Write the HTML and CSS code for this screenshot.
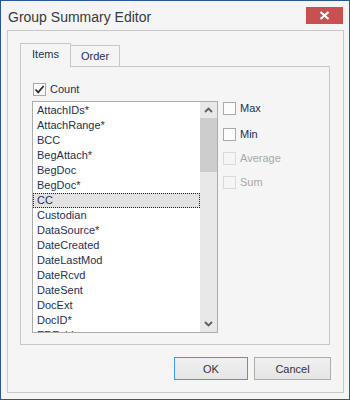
FILE: index.html
```html
<!DOCTYPE html>
<html lang="en">
<head>
    <meta charset="UTF-8">
    <title>Group Summary Editor</title>
    <link rel="stylesheet" href="styles.css">
</head>
<body>

<div class="window">
    <div class="titlebar">
        <div class="title">Group Summary Editor</div>
        <div class="close">
            <svg width="11" height="9" viewBox="0 0 11 9"><path d="M1.5 1 L9.5 8 M9.5 1 L1.5 8" stroke="#fff" stroke-width="2.2"/></svg>
        </div>
    </div>

    <div class="panel">
        <div class="tabs">
            <div class="tab-head">
                <div class="tab active">Items</div>
                <div class="tab">Order</div>
            </div>
            <div class="tab-page">
                <div class="check count">
                    <span class="box">
                        <svg width="11" height="11" viewBox="0 0 11 11"><path d="M1.5 5.5 L4.2 8.3 L9.6 2" stroke="#2b2b2b" stroke-width="1.8" fill="none"/></svg>
                    </span>
                    <span>Count</span>
                </div>

                <div class="columns">
                    <div class="listbox">
                        <div class="items">
                            <div class="item">AttachIDs*</div>
                            <div class="item">AttachRange*</div>
                            <div class="item">BCC</div>
                            <div class="item">BegAttach*</div>
                            <div class="item">BegDoc</div>
                            <div class="item">BegDoc*</div>
                            <div class="item selected">CC</div>
                            <div class="item">Custodian</div>
                            <div class="item">DataSource*</div>
                            <div class="item">DateCreated</div>
                            <div class="item">DateLastMod</div>
                            <div class="item">DateRcvd</div>
                            <div class="item">DateSent</div>
                            <div class="item">DocExt</div>
                            <div class="item">DocID*</div>
                            <div class="item">EDFolder</div>
                        </div>
                        <div class="scrollbar">
                            <div class="arrow">
                                <svg width="9" height="6" viewBox="0 0 9 6"><path d="M1 5 L4.5 1.5 L8 5" stroke="#5f5f5f" stroke-width="1.8" fill="none"/></svg>
                            </div>
                            <div class="thumb"></div>
                            <div class="track"></div>
                            <div class="arrow">
                                <svg width="9" height="6" viewBox="0 0 9 6"><path d="M1 1 L4.5 4.5 L8 1" stroke="#5f5f5f" stroke-width="1.8" fill="none"/></svg>
                            </div>
                        </div>
                    </div>

                    <div class="side">
                        <div class="check"><span class="box"></span><span>Max</span></div>
                        <div class="check min"><span class="box"></span><span>Min</span></div>
                        <div class="check disabled"><span class="box"></span><span>Average</span></div>
                        <div class="check disabled"><span class="box"></span><span>Sum</span></div>
                    </div>
                </div>
            </div>
        </div>

        <div class="buttons">
            <button class="btn ok">OK</button>
            <button class="btn cancel">Cancel</button>
        </div>
    </div>
</div>

</body>
</html>
```

FILE: styles.css
```css
body {
    margin: 0;
    font-family: "Liberation Sans", Arial, sans-serif;
    font-size: 11px;
    color: #243052;
}
.window {
    width: 350px;
    height: 400px;
    box-sizing: border-box;
    border: 1px solid #2b5797;
    background: #f5f5f5;
    display: flex;
    flex-direction: column;
}
.titlebar {
    height: 29px;
    display: flex;
    justify-content: space-between;
    align-items: flex-start;
}
.title {
    padding: 8px 0 0 7px;
    font-size: 14px;
    line-height: 16px;
    color: #3a3a3a;
}
.close {
    width: 37px;
    height: 17px;
    margin: 6px 6px 0 0;
    background: #c75050;
    display: flex;
    align-items: center;
    justify-content: center;
}
.panel {
    flex: 1;
    margin: 0 5px 6px 6px;
    border: 1px solid #c8c8c8;
    padding: 12px 13px 12px 12px;
    display: flex;
    flex-direction: column;
    gap: 12px;
}
.tabs {
    flex: 1;
    display: flex;
    flex-direction: column;
}
.tab-head {
    display: flex;
    align-items: flex-end;
    height: 23px;
}
.tab {
    box-sizing: border-box;
    border: 1px solid #c8c8c8;
    border-bottom: none;
    background: #f5f5f5;
    text-align: center;
}
.tab.active {
    position: relative;
    z-index: 1;
    width: 51px;
    height: 24px;
    margin-bottom: -1px;
    line-height: 21px;
}
.tab + .tab {
    width: 50px;
    height: 21px;
    margin-left: -1px;
    line-height: 21px;
}
.tab-page {
    flex: 1;
    border: 1px solid #c8c8c8;
    padding: 16px 11px 11px 11px;
    display: flex;
    flex-direction: column;
}
.check {
    display: flex;
    align-items: center;
    gap: 4px;
    height: 13px;
    line-height: 13px;
}
.check .box {
    width: 13px;
    height: 13px;
    box-sizing: border-box;
    border: 1px solid #a9a9a9;
    background: #fcfcfc;
    display: flex;
    align-items: center;
    justify-content: center;
}
.check.count {
    margin: 0 0 5px 1px;
}
.check.disabled {
    color: #a8a8a8;
}
.check.disabled .box {
    border-color: #dadada;
    background: #f5f5f5;
}
.columns {
    flex: 1;
    display: flex;
    gap: 5px;
}
.listbox {
    width: 186px;
    height: 232px;
    box-sizing: border-box;
    border: 1px solid #acacac;
    background: #fff;
    display: flex;
}
.items {
    flex: 1;
    overflow: hidden;
    padding-top: 1px;
}
.item {
    height: 15px;
    line-height: 15px;
    padding-left: 4px;
    white-space: nowrap;
}
.item.selected {
    box-sizing: border-box;
    background: #e2e2e2;
    border: 1px dotted #222;
    padding-left: 3px;
    line-height: 13px;
}
.scrollbar {
    width: 17px;
    background: #e8e8e8;
    display: flex;
    flex-direction: column;
}
.arrow {
    height: 16px;
    display: flex;
    align-items: center;
    justify-content: center;
}
.thumb {
    height: 54px;
    background: #cdcdcd;
}
.track {
    flex: 1;
}
.side {
    display: flex;
    flex-direction: column;
    gap: 11px;
    padding-top: 1px;
}
.side .min {
    margin-top: 2px;
}
.buttons {
    display: flex;
    justify-content: flex-end;
    gap: 6px;
    margin-right: -1px;
}
.btn {
    height: 23px;
    box-sizing: border-box;
    border: 1px solid #acacac;
    background: linear-gradient(#f0f0f0, #e5e5e5);
    font-family: "Liberation Sans", Arial, sans-serif;
    font-size: 11px;
    color: #333;
    padding: 0;
}
.btn.ok {
    width: 74px;
    border-color: #3c9bf0;
}
.btn.cancel {
    width: 77px;
}
```
